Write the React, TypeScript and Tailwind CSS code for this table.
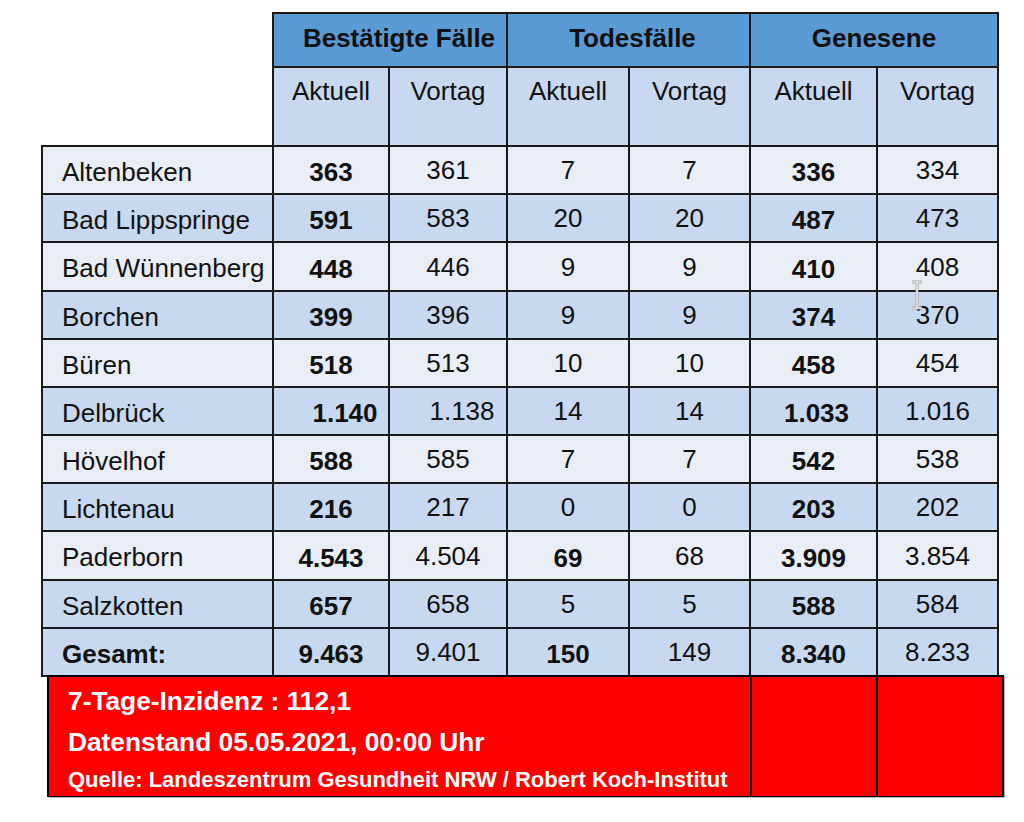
import React from "react"

// Fallzahlen Kreis Paderborn
const rows = [
    { name: "Altenbeken", v: ["363", "361", "7", "7", "336", "334"] },
    { name: "Bad Lippspringe", v: ["591", "583", "20", "20", "487", "473"] },
    { name: "Bad Wünnenberg", v: ["448", "446", "9", "9", "410", "408"] },
    { name: "Borchen", v: ["399", "396", "9", "9", "374", "370"] },
    { name: "Büren", v: ["518", "513", "10", "10", "458", "454"] },
    { name: "Delbrück", v: ["1.140", "1.138", "14", "14", "1.033", "1.016"] },
    { name: "Hövelhof", v: ["588", "585", "7", "7", "542", "538"] },
    { name: "Lichtenau", v: ["216", "217", "0", "0", "203", "202"] },
    { name: "Paderborn", v: ["4.543", "4.504", "69", "68", "3.909", "3.854"] },
    { name: "Salzkotten", v: ["657", "658", "5", "5", "588", "584"] },
    { name: "Gesamt:", v: ["9.463", "9.401", "150", "149", "8.340", "8.233"] },
]

const boldDeaths = ["Paderborn", "Gesamt:"]

export default function App() {
    return (
        <div className="relative w-[1024px] h-[822px] bg-white pt-[12px] pl-[41px] font-['Liberation_Sans',Arial,sans-serif] text-[26px] text-[#111]">
            {/* Header */}
            <div className="ml-[231px] w-[727px] grid grid-cols-[114px_116px_120px_119px_125px_119px] grid-rows-[52px_77px] gap-[2px] bg-[#1a1a1a] px-[2px] pt-[2px]">
                <div className="col-span-2 bg-[#5b9bd5] font-bold leading-[30px] pt-[9px] pl-[18px] text-center">Bestätigte Fälle</div>
                <div className="col-span-2 bg-[#5b9bd5] font-bold leading-[30px] pt-[9px] pl-[8px] text-center">Todesfälle</div>
                <div className="col-span-2 bg-[#5b9bd5] font-bold leading-[30px] pt-[9px] text-center">Genesene</div>
                {["Aktuell", "Vortag", "Aktuell", "Vortag", "Aktuell", "Vortag"].map((h, i) => (
                    <div key={i} className="bg-[#c6d9f0] leading-[30px] pt-[8px] text-center">{h}</div>
                ))}
            </div>

            {/* Body */}
            <div className="w-[958px] grid grid-cols-[229px_114px_116px_120px_119px_125px_119px] grid-rows-[46px_46px_47px_46px_46px_46px_46px_46px_47px_46px_46px] gap-[2px] bg-[#1a1a1a] p-[2px]">
                {rows.map((row, r) => {
                    const bg = r % 2 === 0 && r !== 10 ? "bg-[#e9edf6]" : "bg-[#c6d9f0]"
                    const isTotal = row.name === "Gesamt:"
                    return (
                        <React.Fragment key={row.name}>
                            <div className={`${bg} flex items-center pl-[19px] pt-[3px] leading-[30px] ${isTotal ? "font-bold" : ""}`}>
                                {row.name}
                            </div>
                            {row.v.map((val, c) => {
                                const bold = c === 0 || c === 4 || (c === 2 && boldDeaths.includes(row.name))
                                const shift = row.name === "Delbrück" && c < 2 ? "pl-[28px]" : row.name === "Delbrück" && c === 4 ? "pl-[6px]" : ""
                                return (
                                    <div
                                        key={c}
                                        className={`${bg} flex items-center justify-center leading-[30px] ${bold ? "font-bold pt-[4px]" : ""} ${shift}`}
                                    >
                                        {val}
                                    </div>
                                )
                            })}
                        </React.Fragment>
                    )
                })}
            </div>

            {/* Inzidenz box */}
            <div className="-mt-[2px] ml-[6px] w-[957px] h-[122px] border-2 border-black bg-black grid grid-cols-[701px_124px_124px] gap-[2px] shadow-[1px_1px_0_#b5b5b5] text-white font-bold">
                <div className="bg-[#ff0000] pl-[19px] pt-[4px]">
                    <div className="leading-[41px] text-[26.3px]">7-Tage-Inzidenz : 112,1</div>
                    <div className="leading-[41px] text-[26.3px]">Datenstand 05.05.2021, 00:00 Uhr</div>
                    <div className="leading-[33px] text-[22px]">Quelle: Landeszentrum Gesundheit NRW / Robert Koch-Institut</div>
                </div>
                <div className="bg-[#ff0000]" />
                <div className="bg-[#ff0000]" />
            </div>

            {/* text cursor */}
            <svg className="absolute left-[910px] top-[280px]" width="14" height="30" viewBox="0 0 14 30">
                <path d="M2 2h10M7 2v26M2 28h10" stroke="#a0a0a0" strokeWidth="3" fill="none" />
                <path d="M2 2h10M7 2v26M2 28h10" stroke="#ffffff" strokeWidth="1.2" fill="none" />
            </svg>
        </div>
    )
}
